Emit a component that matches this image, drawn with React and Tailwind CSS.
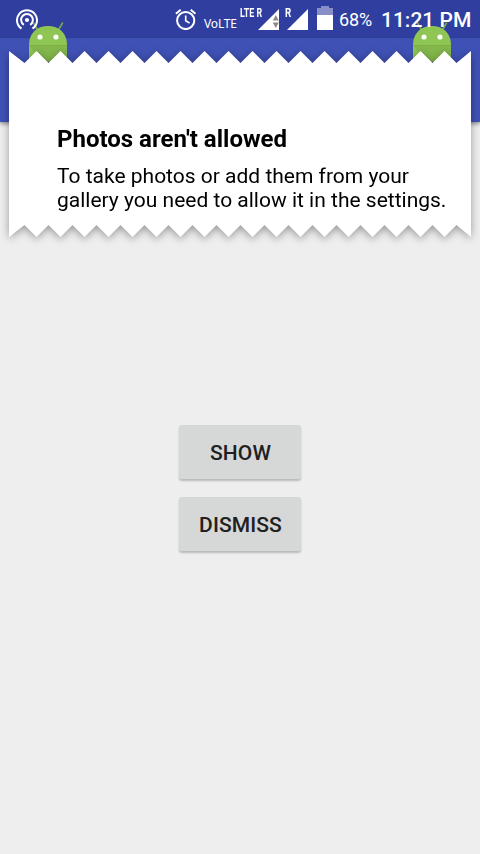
const PEAKS = 18;

// Outline of the torn paper: zigzag along the top and bottom edges.
function paperOutline() {
  const points = ['0px 0px', '15.5px 12px'];
  for (let i = 0; i < PEAKS; i++) {
    points.push(`${27.5 + i * 24}px 0px`, `${39.5 + i * 24}px 12px`);
  }
  points.push('462px 0px', '462px 186px');
  for (let i = PEAKS - 1; i >= 0; i--) {
    points.push(`${39.5 + i * 24}px 174px`, `${27.5 + i * 24}px 186px`);
  }
  points.push('15.5px 174px', '0px 186px');
  return `polygon(${points.join(', ')})`;
}

function Android() {
  return (
    <svg width="38" height="40" viewBox="0 0 38 40" className="block">
      <path d="M8 7L4.5 1M30 7l3.5-6" stroke="#75a94d" strokeWidth="1.6" strokeLinecap="round" />
      <path d="M0 23C0 11 8 4 19 4s19 7 19 19z" fill="#8fc553" />
      <path d="M0 23h38v17H0z" fill="#8fc553" />
      <path d="M0 24l16 16h22V24z" fill="#84b74c" />
      <path d="M0 23.5h38" stroke="#7fb148" strokeWidth="1" />
      <circle cx="11" cy="15" r="2.6" fill="#fafafa" />
      <circle cx="27" cy="15" r="2.6" fill="#fafafa" />
    </svg>
  );
}

function Hotspot() {
  return (
    <svg width="22" height="22" viewBox="0 0 22 22" className="mt-[9px] block" fill="none" stroke="#fff" strokeWidth="2">
      <path d="M5.5 19.6a10 10 0 1 1 11 0" />
      <path d="M7.8 15.8a5.9 5.9 0 1 1 6.4 0" />
      <circle cx="11" cy="11" r="2.1" fill="#fff" stroke="none" />
    </svg>
  );
}

function Alarm() {
  return (
    <svg width="22" height="22" viewBox="0 0 22 22" className="mt-2 block" fill="none" stroke="#fff" strokeWidth="2">
      <circle cx="10.7" cy="12.5" r="8.6" />
      <path d="M10.7 7.5v5.2l3.9 2.4" strokeWidth="1.6" />
      <path d="M.9 5.7l4.8-4M20.5 5.7l-4.8-4" />
    </svg>
  );
}

function Signal({ data = false }) {
  return (
    <svg width="21" height="21" viewBox="0 0 21 21" className="block">
      <path d="M21 0v21H0z" fill="#fff" />
      {data && <path d="M14.8 11.5l3-5.5 3 5.5zM14.8 13.5l3 5.5 3-5.5z" fill="#8a8a8a" />}
    </svg>
  );
}

function StatusBar() {
  return (
    <div className="absolute inset-x-0 top-0 z-20 flex h-[38px] items-start whitespace-nowrap text-white">
      <div className="ml-4"><Hotspot /></div>
      <div className="ml-[137px]"><Alarm /></div>
      <span className="mt-4 ml-[7px] w-[34px] font-['Noto_Sans','Open_Sans',sans-serif] text-[12px] leading-4 tracking-[-0.15px]">VoLTE</span>
      <div className="relative mt-[9px] ml-5">
        <Signal data />
        <span className="absolute -top-[2px] -left-[18px] origin-left scale-x-[0.68] text-[13px] leading-3 font-bold">LTE R</span>
      </div>
      <div className="relative mt-[9px] ml-2">
        <Signal />
        <span className="absolute -top-[2px] -left-[2.5px] origin-left scale-x-[0.75] text-[13px] leading-3 font-bold">R</span>
      </div>
      <svg width="16" height="24" viewBox="0 0 16 24" className="mt-[6px] ml-[9px] block">
        <path d="M4 0h8v2h4v7H0V2h4z" fill="#888fc8" />
        <path d="M0 9h16v15H0z" fill="#fff" />
      </svg>
      <span className="mt-[9px] ml-[6px] w-[42px] text-[18px] leading-[22px] tracking-[-0.1px]">68%</span>
      <span className="mt-2 text-[21px] leading-6 font-medium">11:21 PM</span>
    </div>
  );
}

function ActionButton({ children }) {
  return (
    <button className="flex h-[54px] w-[122px] items-center justify-center rounded-[3px] bg-[#d6d7d7] pt-1 pl-px text-[21px] font-medium tracking-[0.1px] text-[#202020] shadow-[0_2px_2px_rgba(0,0,0,0.22)]">
      {children}
    </button>
  );
}

export default function App() {
  return (
    <div className="relative flex h-[854px] w-[480px] flex-col overflow-hidden bg-[#eeeeee] font-[Roboto,sans-serif]">
      <div className="h-[38px] shrink-0 bg-[#303f9f]" />
      <div className="h-[84px] shrink-0 bg-[#3f51b5] shadow-[0_2px_4px_rgba(0,0,0,0.4)]" />
      <main className="flex flex-col items-center gap-[18px] pt-[303px]">
        <ActionButton>SHOW</ActionButton>
        <ActionButton>DISMISS</ActionButton>
      </main>

      <div className="absolute top-[21.5px] left-[29px]"><Android /></div>
      <div className="absolute top-[21.5px] left-[413px]"><Android /></div>

      <StatusBar />

      <section className="absolute top-[51px] left-[9px] z-10 h-[186px] w-[462px] drop-shadow-[0_2px_4px_rgba(0,0,0,0.36)]">
        <div className="h-full bg-white pt-[74px] pl-12 text-black" style={{ clipPath: paperOutline() }}>
          <h1 className="text-[24px] leading-7 font-bold whitespace-nowrap">Photos aren't allowed</h1>
          <p className="mt-[11px] text-[21px] leading-6 whitespace-nowrap">
            To take photos or add them from your
            <br />
            gallery you need to allow it in the settings.
          </p>
        </div>
      </section>
    </div>
  );
}
